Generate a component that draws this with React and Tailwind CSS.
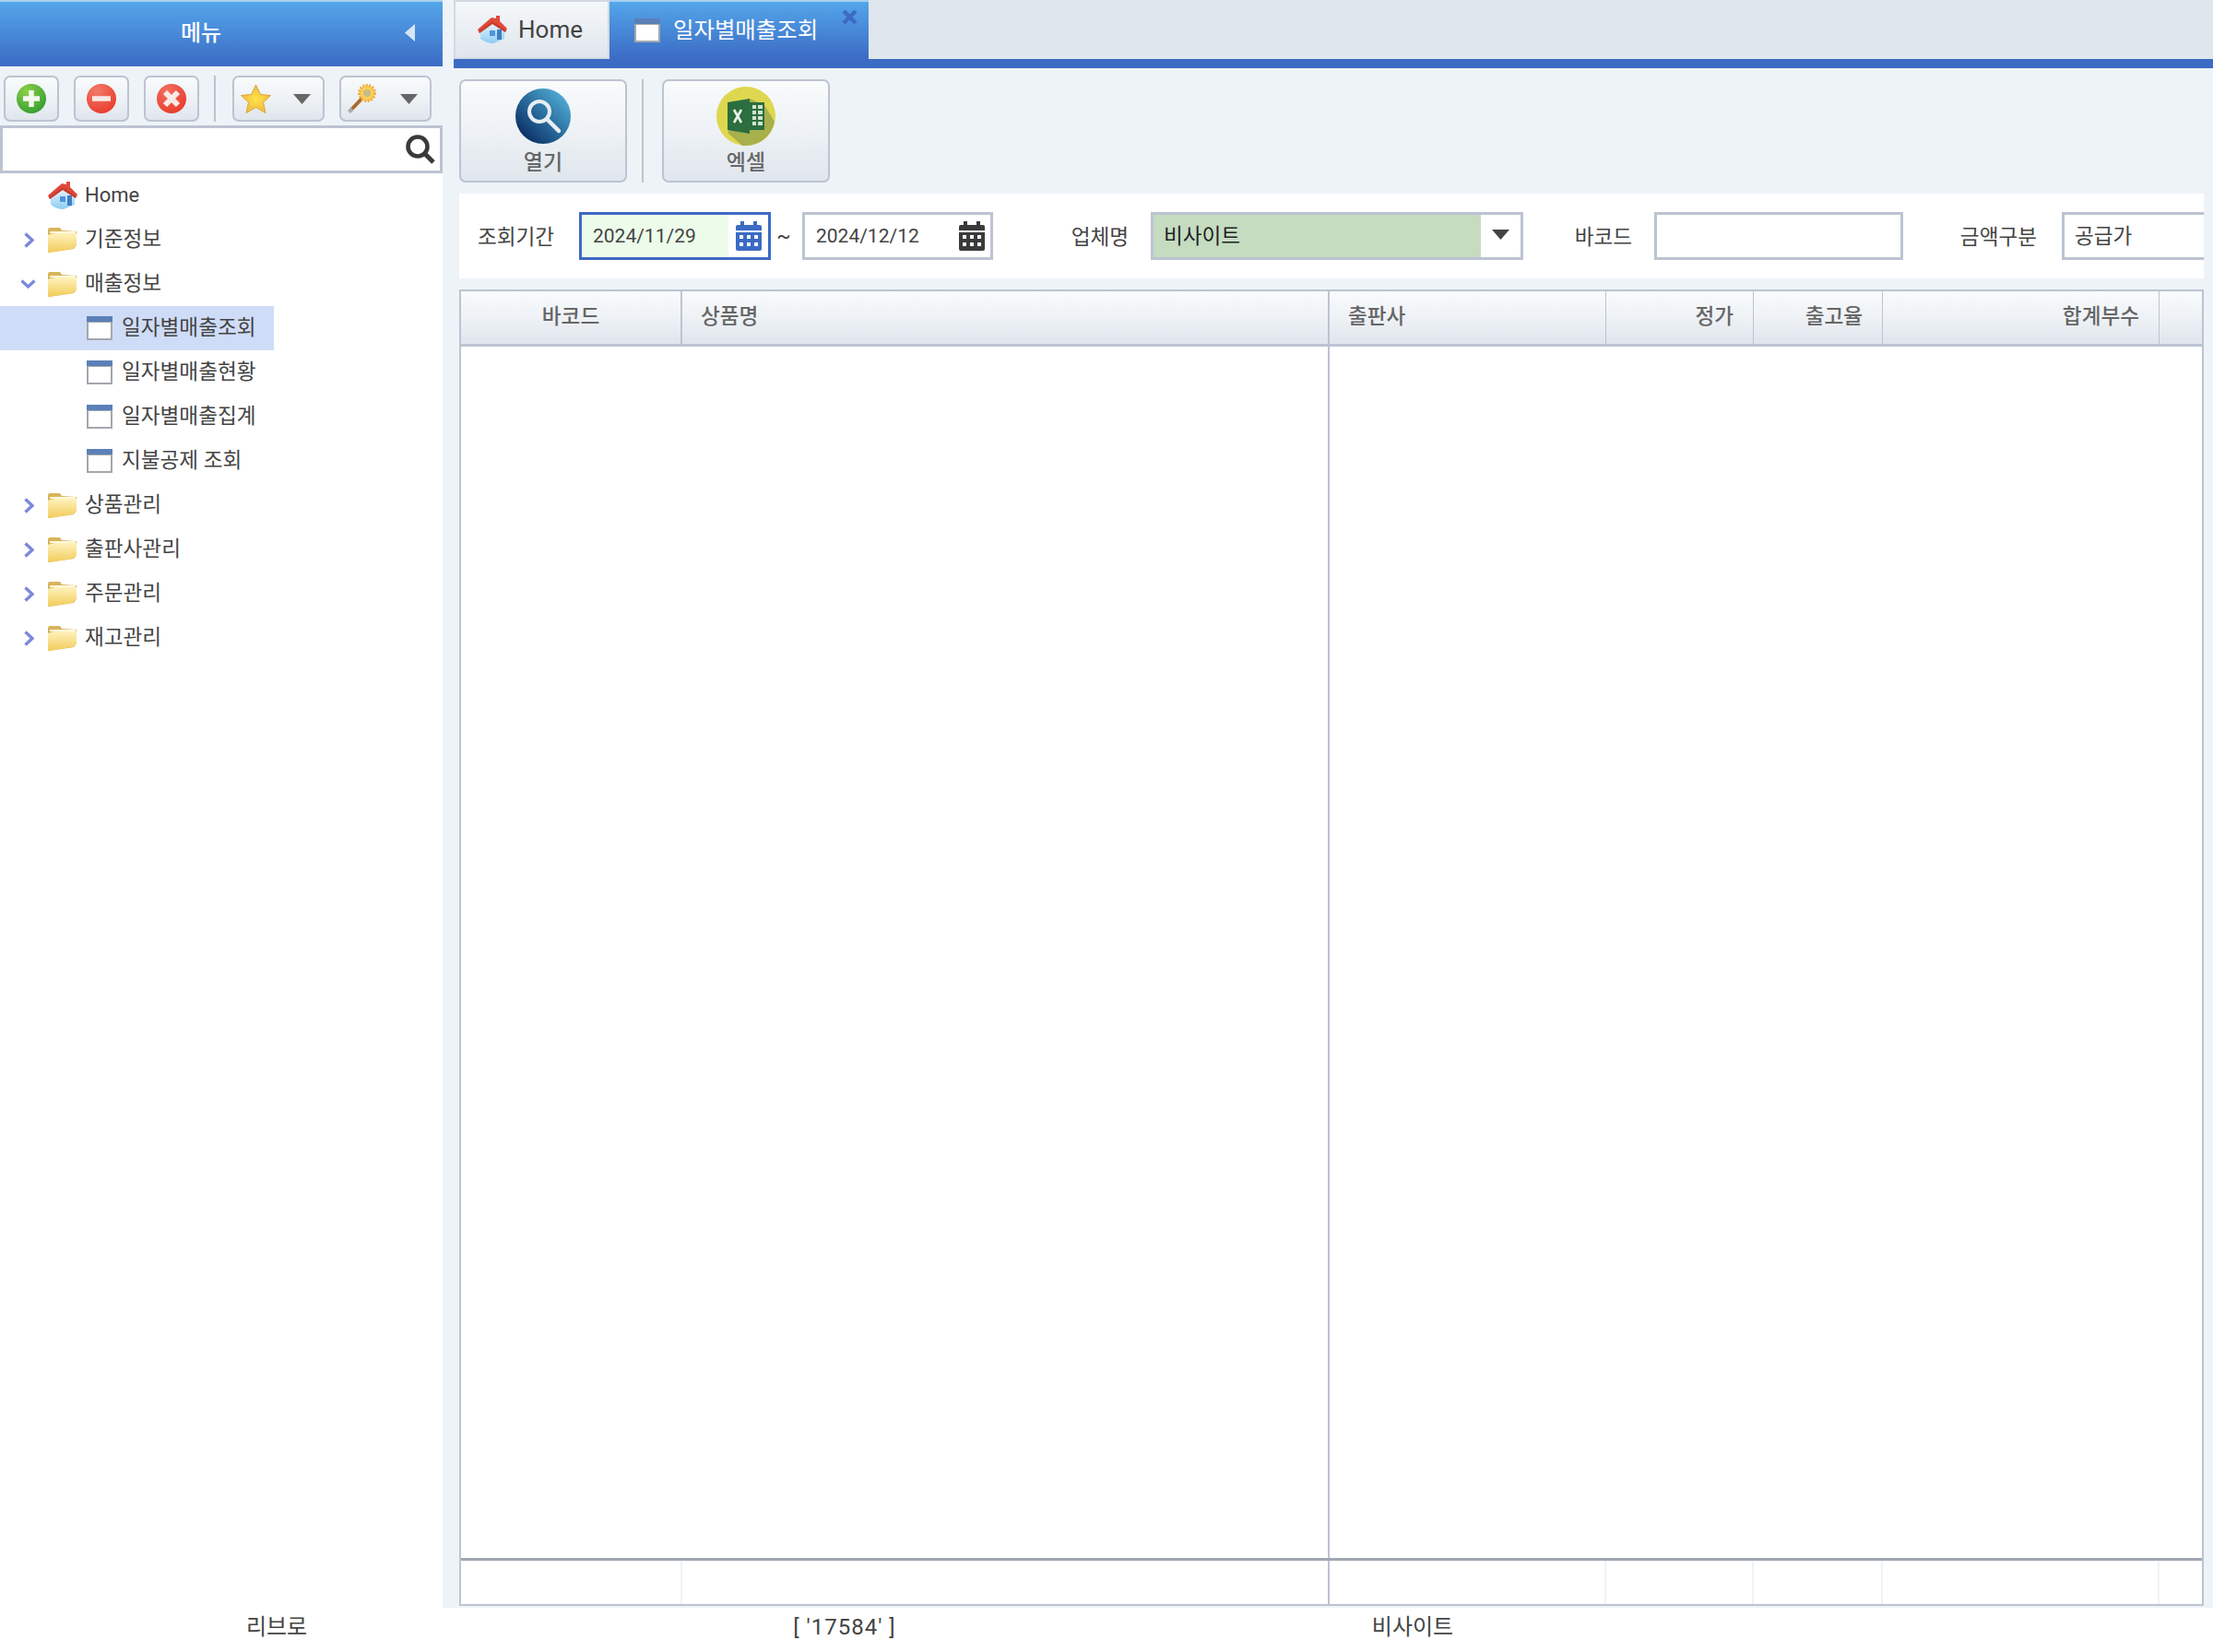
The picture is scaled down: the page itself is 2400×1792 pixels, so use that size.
import React from "react";

const btnClass =
    "rounded-[7px] border-2 border-[#bcc3d2] bg-gradient-to-b from-[#f9fbfc] via-[#eef2f6] to-[#e0e6ed]";

const HomeIcon = ({ className }) => (
    <svg className={className} viewBox="0 0 32 30">
        <defs>
            <linearGradient id="homeWall" x1="0" y1="0" x2="0" y2="1">
                <stop offset="0" stopColor="#f1f8fd" />
                <stop offset="1" stopColor="#8ccdf2" />
            </linearGradient>
        </defs>
        <path d="M3 15 L16 6 L29 14 L29 25 Q24 27 17 30 Q9 30 3 25 Z" fill="url(#homeWall)" />
        <rect x="13" y="16" width="6" height="6" fill="#4d94dc" />
        <rect x="21" y="15" width="5" height="11" fill="#3f7fc2" />
        <path d="M0 15 L15 2 L20 3 L20 0 L24 0 L24 6 L32 14 L30 18 L16 9 L2 19 Z" fill="#e0493a" />
        <path d="M2 19 L16 9 L30 18 L31 16 L16 6 L1 17 Z" fill="#b93325" opacity="0.6" />
    </svg>
);

const FolderIcon = () => (
    <svg className="w-8 h-7 shrink-0" viewBox="0 0 32 28">
        <defs>
            <linearGradient id="folderBack" x1="0" y1="0" x2="0" y2="1">
                <stop offset="0" stopColor="#fff3c0" />
                <stop offset="1" stopColor="#f2cc5a" />
            </linearGradient>
        </defs>
        <path d="M0 3 L1 1 L13 1 L15 4 L31 5 L31 20 L28 24 L1 28 L0 28 Z" fill="#d8b45c" />
        <path d="M0 28 L0 9 Q10 5 31 7 L31 20 L27 24 Z" fill="url(#folderBack)" />
        <path d="M2 6 L30 6" stroke="#fff8dc" strokeWidth="2" />
    </svg>
);

const WindowIcon = ({ className = "w-7 h-[26px] shrink-0" }) => (
    <svg className={className} viewBox="0 0 28 26">
        <rect x="0" y="0" width="28" height="26" fill="#a3a7ad" />
        <rect x="2" y="7" width="24" height="17" fill="#fff" />
        <rect x="0" y="0" width="28" height="6" fill="#5b80b8" />
    </svg>
);

const Chevron = ({ open }) =>
    open ? (
        <svg className="w-[17px] h-[10px] ml-[22px] mr-[13px] shrink-0" viewBox="0 0 17 10">
            <path d="M1.5 1.5 L8.5 8 L15.5 1.5" fill="none" stroke="#7c88dc" strokeWidth="3.2" />
        </svg>
    ) : (
        <svg className="w-[11px] h-[17px] ml-[26px] mr-[15px] shrink-0" viewBox="0 0 11 17">
            <path d="M1.5 1.5 L9 8.5 L1.5 15.5" fill="none" stroke="#7c88dc" strokeWidth="3.4" />
        </svg>
    );

const CircleIcon = ({ id, light, dark, children }) => (
    <svg className="w-8 h-8" viewBox="0 0 32 32">
        <defs>
            <radialGradient id={id} cx="0.35" cy="0.25" r="0.85">
                <stop offset="0" stopColor={light} />
                <stop offset="1" stopColor={dark} />
            </radialGradient>
        </defs>
        <circle cx="16" cy="16" r="16" fill={`url(#${id})`} />
        {children}
    </svg>
);

const Arrow = ({ className = "", color = "#666" }) => (
    <svg className={className} viewBox="0 0 19 11">
        <path d="M0 0 L19 0 L9.5 11 Z" fill={color} />
    </svg>
);

const StarIcon = () => (
    <svg className="w-[33px] h-8" viewBox="0 0 33 32">
        <defs>
            <radialGradient id="starFill" cx="0.5" cy="0.5" r="0.6">
                <stop offset="0" stopColor="#fde24a" />
                <stop offset="1" stopColor="#f0b43a" />
            </radialGradient>
        </defs>
        <path d="M16.5 1 L21.5 11.5 L32.5 12.5 L24.5 20 L27 31.5 L16.5 25.5 L6 31.5 L8.5 20 L0.5 12.5 L11.5 11.5 Z" fill="url(#starFill)" stroke="#dca23c" strokeWidth="1" />
    </svg>
);

const WandIcon = () => (
    <svg className="w-8 h-8" viewBox="0 0 32 32">
        <path d="M3 29 L20 11" stroke="#a96a2c" strokeWidth="4" />
        <path d="M1.5 30.5 L5 27" stroke="#a9acb2" strokeWidth="4" />
        <circle cx="21" cy="10" r="8.5" fill="#f8d05a" stroke="#f3a93a" strokeWidth="3" strokeDasharray="2 1.5" />
        <circle cx="21" cy="10" r="4" fill="#c9b98a" />
    </svg>
);

const CalendarIcon = ({ color }) => (
    <svg className="w-7 h-8 shrink-0 ml-2" viewBox="0 0 28 32">
        <rect x="0" y="4" width="28" height="28" rx="2" fill={color} />
        <rect x="5" y="0" width="4" height="7" fill={color} />
        <rect x="19" y="0" width="4" height="7" fill={color} />
        <rect x="0" y="10" width="28" height="2" fill="#fff" />
        {[4, 12, 20].map((x) => (
            <React.Fragment key={x}>
                <rect x={x} y="15" width="4" height="4" fill="#fff" />
                <rect x={x} y="23" width="4" height="4" fill="#fff" />
            </React.Fragment>
        ))}
    </svg>
);

const OpenIcon = () => (
    <svg className="w-[60px] h-[60px]" viewBox="0 0 60 60">
        <defs>
            <linearGradient id="openBg" x1="1" y1="0" x2="0" y2="1">
                <stop offset="0" stopColor="#5cc0e4" />
                <stop offset="0.5" stopColor="#2a6c9e" />
                <stop offset="1" stopColor="#001a50" />
            </linearGradient>
        </defs>
        <circle cx="30" cy="30" r="30" fill="url(#openBg)" />
        <circle cx="26" cy="25" r="11" fill="none" stroke="#e8eef2" strokeWidth="4" />
        <path d="M34 33 L47 46" stroke="#e8eef2" strokeWidth="4.5" strokeLinecap="round" />
    </svg>
);

const ExcelIcon = () => (
    <svg className="w-16 h-16" viewBox="0 0 64 64">
        <circle cx="32" cy="32" r="32" fill="#dfd74f" />
        <path d="M12 50 L36 13 L52 20 L63 38 A32 32 0 0 1 32 64 L28 64 Z" fill="#a8b04c" />
        <path d="M12 17 L36 13 L36 51 L12 47 Z" fill="#2c6e3f" />
        <rect x="36" y="17" width="16" height="30" fill="#2c6e3f" />
        {[20, 26, 32, 38].map((y) => (
            <React.Fragment key={y}>
                <rect x="39" y={y} width="4" height="4" fill="#cfe4d2" />
                <rect x="45" y={y} width="5" height="4" fill="#cfe4d2" />
            </React.Fragment>
        ))}
        <path d="M19 25 L27 39 M27 25 L19 39" stroke="#e8f2ea" strokeWidth="2.6" />
    </svg>
);

const TreeFolder = ({ label, open }) => (
    <div className="flex items-center h-12">
        <Chevron open={open} />
        <FolderIcon />
        <span className="ml-2 mb-[1px]">{label}</span>
    </div>
);

const TreeLeaf = ({ label, selected }) => (
    <div className={`flex items-center h-12 w-[297px] pl-[94px] ${selected ? "bg-[#cfdcf7]" : ""}`}>
        <WindowIcon />
        <span className="ml-[10px] mb-[1px]">{label}</span>
    </div>
);

const Sidebar = () => (
    <aside className="w-[480px] shrink-0 bg-white flex flex-col">
        <div className="h-[72px] flex items-center border-t-2 border-[#a8cff0] bg-gradient-to-b from-[#54a6ea] to-[#3c6bc4] text-white">
            <div className="w-[436px] text-center text-[24px] font-medium mb-[3px]">메뉴</div>
            <svg className="w-[11px] h-[19px] ml-[3px] mb-[3px]" viewBox="0 0 11 19">
                <path d="M11 0 L11 19 L0 9.5 Z" fill="#d6e6f8" />
            </svg>
        </div>
        <div className="h-16 flex items-start pt-[10px] pl-1 bg-[#eef3f8]">
            <button className={`${btnClass} w-[60px] h-[50px] flex items-center justify-center`}>
                <CircleIcon id="addFill" light="#8ed04a" dark="#2f9a2e">
                    <path d="M16 7 L16 25 M7 16 L25 16" stroke="#f4f8ee" strokeWidth="5.5" />
                </CircleIcon>
            </button>
            <button className={`${btnClass} w-[60px] h-[50px] ml-4 flex items-center justify-center`}>
                <CircleIcon id="minusFill" light="#f27a68" dark="#e8392a">
                    <path d="M6 16 L26 16" stroke="#fbeae6" strokeWidth="5.5" />
                </CircleIcon>
            </button>
            <button className={`${btnClass} w-[60px] h-[50px] ml-4 flex items-center justify-center`}>
                <CircleIcon id="closeFill" light="#f2705c" dark="#e8392a">
                    <path d="M9 9 L23 23 M23 9 L9 23" stroke="#fbeae6" strokeWidth="6" />
                </CircleIcon>
            </button>
            <div className="w-[2px] h-[50px] ml-4 bg-[#bcc3d2]" />
            <button className={`${btnClass} w-[100px] h-[50px] ml-[18px] flex items-center pl-[7px]`}>
                <StarIcon />
                <Arrow className="w-[19px] h-[11px] ml-[24px]" />
            </button>
            <button className={`${btnClass} w-[100px] h-[50px] ml-4 flex items-center pl-[7px]`}>
                <WandIcon />
                <Arrow className="w-[19px] h-[11px] ml-[25px]" />
            </button>
        </div>
        <div className="h-[52px] border-[3px] border-[#bcc3d2] bg-white flex items-center justify-end pr-[5px]">
            <svg className="w-8 h-8" viewBox="0 0 32 32">
                <circle cx="13" cy="13" r="10.5" fill="none" stroke="#3a3a3a" strokeWidth="4.6" />
                <path d="M20.5 20.5 L30 30" stroke="#3a3a3a" strokeWidth="5" />
            </svg>
        </div>
        <div className="text-[22.6px] text-[#444]">
            <div className="flex items-center h-12 pl-[52px]">
                <HomeIcon className="w-8 h-[30px] shrink-0" />
                <span className="ml-2 mb-[1px] text-[22px]">Home</span>
            </div>
            <TreeFolder label="기준정보" />
            <TreeFolder label="매출정보" open />
            <TreeLeaf label="일자별매출조회" selected />
            <TreeLeaf label="일자별매출현황" />
            <TreeLeaf label="일자별매출집계" />
            <TreeLeaf label="지불공제 조회" />
            <TreeFolder label="상품관리" />
            <TreeFolder label="출판사관리" />
            <TreeFolder label="주문관리" />
            <TreeFolder label="재고관리" />
        </div>
    </aside>
);

const columns = "grid grid-cols-[240px_702px_300px_160px_140px_300px_46px]";

const GridTable = () => (
    <div className="mt-3 ml-[18px] w-[1892px] h-[1428px] border-2 border-[#bcc3d2] bg-white flex flex-col">
        <div className={`${columns} h-[60px] shrink-0 border-b-[3px] border-[#bcc3d2] bg-gradient-to-b from-[#f9fbfc] via-[#eef2f6] to-[#e0e6ed] text-[22.6px] font-medium text-[#666]`}>
            <div className="flex items-center justify-center pb-[1px] border-r-2 border-[#bcc3d2]">바코드</div>
            <div className="flex items-center pl-5 pb-[1px] border-r-2 border-[#bcc3d2]">상품명</div>
            <div className="flex items-center pl-5 pb-[1px] border-r border-[#bcc3d2]">출판사</div>
            <div className="flex items-center justify-end pr-[21px] pb-[1px] border-r border-[#bcc3d2]">정가</div>
            <div className="flex items-center justify-end pr-[21px] pb-[1px] border-r border-[#bcc3d2]">출고율</div>
            <div className="flex items-center justify-end pr-[21px] pb-[1px] border-r border-[#bcc3d2]">합계부수</div>
            <div />
        </div>
        <div className="flex-1 flex">
            <div className="w-[942px] border-r-2 border-[#bcc3d2]" />
        </div>
        <div className={`${columns} h-[50px] shrink-0 border-t-[3px] border-[#a0a6b2]`}>
            <div className="border-r-2 border-[#eef3f8]" />
            <div className="border-r-2 border-[#bcc3d2]" />
            <div className="border-r-2 border-[#eef3f8]" />
            <div className="border-r-2 border-[#eef3f8]" />
            <div className="border-r-2 border-[#eef3f8]" />
            <div className="border-r-2 border-[#eef3f8]" />
            <div />
        </div>
    </div>
);

const DateInput = ({ value, active }) => (
    <div className={`h-[52px] shrink-0 border-[3px] flex items-center ${active ? "w-[208px] border-[#3c6bc4]" : "w-[207px] border-[#bcc3d2]"}`}>
        <div className={`h-full w-[159px] flex items-center pl-3 pt-[2px] text-[21px] ${active ? "bg-[#edfcea]" : ""}`}>{value}</div>
        <CalendarIcon color={active ? "#3c6bc4" : "#3a3a3a"} />
    </div>
);

const SearchForm = () => (
    <div className="ml-[18px] w-[1892px] h-[92px] bg-white flex items-center overflow-hidden text-[22.6px] text-[#444]">
        <div className="w-[130px] shrink-0 pl-5 pt-[3px]">조회기간</div>
        <DateInput value="2024/11/29" active />
        <div className="w-[28px] shrink-0 text-center">~</div>
        <div className="w-[6px] shrink-0" />
        <DateInput value="2024/12/12" />
        <div className="w-[171px] shrink-0 text-right pr-6 pt-[3px]">업체명</div>
        <div className="w-[404px] shrink-0 h-[52px] border-[3px] border-[#bcc3d2] flex items-center">
            <div className="w-[355px] h-full bg-[#c5dcc1] flex items-center pl-[11px] pt-[2px] text-[#222]">비사이트</div>
            <Arrow className="w-[19px] h-[11px] ml-[12px] mb-1" color="#444" />
        </div>
        <div className="w-[142px] shrink-0 text-right pr-6 pt-[3px]">바코드</div>
        <div className="w-[270px] shrink-0 h-[52px] border-[3px] border-[#bcc3d2]" />
        <div className="w-[172px] shrink-0 text-right pr-[27px] pt-[3px]">금액구분</div>
        <div className="w-[200px] shrink-0 h-[52px] border-[3px] border-[#bcc3d2] flex items-center pl-[11px] pt-[2px]">공급가</div>
    </div>
);

const Main = () => (
    <main className="w-[1920px] shrink-0 bg-[#eef3f8] flex flex-col">
        <div className="ml-3 h-16 shrink-0 bg-[#e0e6ed] flex">
            <div className="w-[169px] h-16 flex items-center pl-[24px] border-2 border-[#d3d9e2] bg-gradient-to-b from-[#f5f8fa] to-[#e0e6ed] text-[26px] text-[#444]">
                <HomeIcon className="w-8 h-[30px] shrink-0" />
                <span className="ml-3">Home</span>
            </div>
            <div className="relative w-[281px] h-16 flex items-center pl-[27px] border-t-2 border-[#a8cff0] bg-gradient-to-b from-[#54a6ea] to-[#3c6bc4] text-[24.4px] text-white">
                <WindowIcon />
                <span className="ml-[14px]">일자별매출조회</span>
                <svg className="absolute top-2 right-3 w-[17px] h-[17px]" viewBox="0 0 17 17">
                    <path d="M2 2 L15 15 M15 2 L2 15" stroke="#3c6bc4" strokeWidth="4.5" />
                </svg>
            </div>
        </div>
        <div className="ml-3 h-[10px] shrink-0 bg-[#3c6bc4]" />
        <div className="h-[136px] shrink-0 pt-3 pl-[18px] flex items-start">
            <button className={`${btnClass} w-[182px] h-[112px] flex flex-col items-center pt-2 text-[23px] font-medium text-[#666] leading-none`}>
                <OpenIcon />
                <span className="mt-[9px]">열기</span>
            </button>
            <div className="w-[2px] h-[112px] ml-4 bg-[#bcc3d2]" />
            <button className={`${btnClass} w-[182px] h-[112px] ml-5 flex flex-col items-center pt-[6px] text-[23px] font-medium text-[#666] leading-none`}>
                <ExcelIcon />
                <span className="mt-[7px]">엑셀</span>
            </button>
        </div>
        <SearchForm />
        <GridTable />
    </main>
);

export default function App() {
    return (
        <div className="w-[2400px] h-[1792px] bg-white overflow-hidden flex flex-col font-['Roboto','Noto_Sans_CJK_KR',sans-serif]">
            <div className="flex h-[1744px] shrink-0">
                <Sidebar />
                <Main />
            </div>
            <div className="flex-1 grid grid-cols-[600px_600px_600px] gap-4 items-center text-[24px] text-[#444] text-center pb-[6px]">
                <div>리브로</div>
                <div className="tracking-[1px]">[ '17584' ]</div>
                <div>비사이트</div>
            </div>
        </div>
    );
}
